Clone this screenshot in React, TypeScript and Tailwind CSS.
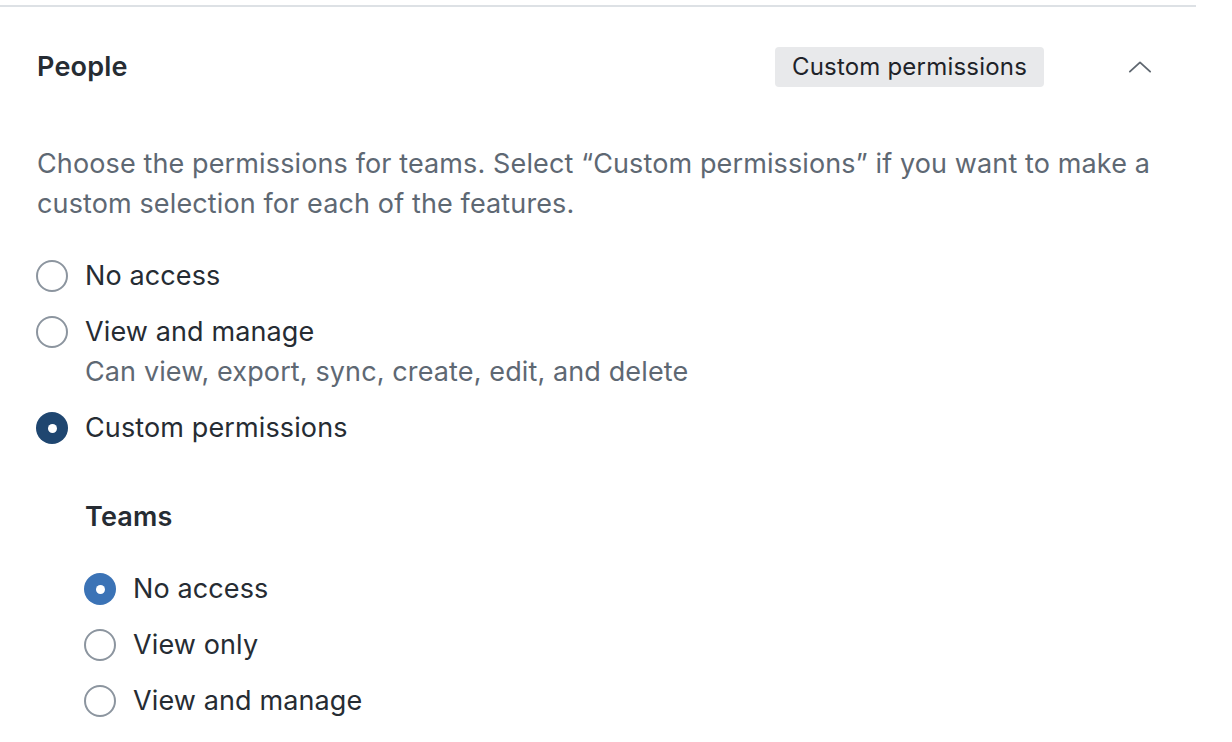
import React, { useState } from 'react';

type Option = {
    value: string;
    label: string;
    hint?: string;
};

const roleOptions: Option[] = [
    { value: 'none', label: 'No access' },
    { value: 'manage', label: 'View and manage', hint: 'Can view, export, sync, create, edit, and delete' },
    { value: 'custom', label: 'Custom permissions' },
];

const teamOptions: Option[] = [
    { value: 'none', label: 'No access' },
    { value: 'view', label: 'View only' },
    { value: 'manage', label: 'View and manage' },
];

const Radio = ({ checked, tone }: { checked: boolean; tone: 'navy' | 'blue' }) => {
    if (!checked) {
        return <span className="block w-8 h-8 rounded-full border-2 border-[#8c959f] bg-white shrink-0" />;
    }
    return (
        <span
            className={
                tone === 'navy'
                    ? 'flex items-center justify-center w-8 h-8 rounded-full bg-[#1f4670] shrink-0'
                    : 'flex items-center justify-center w-8 h-8 rounded-full bg-[#3b73b6] shrink-0'
            }
        >
            <span className="block w-[9px] h-[9px] rounded-full bg-white" />
        </span>
    );
};

const RadioGroup = ({
    options,
    selected,
    onSelect,
    tone,
}: {
    options: Option[];
    selected: string;
    onSelect: (v: string) => void;
    tone: 'navy' | 'blue';
}) => (
    <div className="flex flex-col gap-4">
        {options.map((opt) => (
            <div key={opt.value} className="flex flex-col">
                <button
                    type="button"
                    onClick={() => onSelect(opt.value)}
                    className="flex items-center gap-[17px] h-10 text-left"
                >
                    <Radio checked={selected === opt.value} tone={tone} />
                    <span className="text-[27px] text-[#262c33] tracking-[0.12px]">{opt.label}</span>
                </button>
                {opt.hint && (
                    <div className="pl-[49px] h-10 flex items-center text-[27px] text-[#5e6873] tracking-[0.12px]">
                        {opt.hint}
                    </div>
                )}
            </div>
        ))}
    </div>
);

const App = () => {
    const [role, setRole] = useState('custom');
    const [teams, setTeams] = useState('none');
    const [open, setOpen] = useState(true);

    return (
        <div className="bg-white min-h-[742px] pt-[5px]" style={{ fontFamily: 'Inter, "Noto Sans", sans-serif' }}>
            <div className="w-[1196px] border-t-2 border-[#dde1e5] pl-9 pr-11">
                <div className="flex items-center h-10 mt-10">
                    <h2 className="flex-1 text-[27px] font-semibold text-[#262c33] pl-px tracking-[0.2px]">People</h2>
                    <span className="h-10 px-[17px] flex items-center rounded bg-[#e8e9eb] text-[24px] text-[#1e2329] tracking-[0.2px]">
                        Custom permissions
                    </span>
                    <button type="button" onClick={() => setOpen(!open)} className="ml-[84px] w-6 h-6 flex items-center justify-center">
                        <svg width="26" height="16" viewBox="0 0 26 16" fill="none">
                            <path d="M2 13 L13 3 L24 13" stroke="#5f6770" strokeWidth="2" strokeLinecap="round" strokeLinejoin="round" />
                        </svg>
                    </button>
                </div>

                {open && (
                    <div>
                        <p className="mt-[57px] pl-px text-[27px] leading-10 text-[#5e6873] tracking-[0.12px] max-w-[1140px]">
                            Choose the permissions for teams. Select “Custom permissions” if you want to make a custom selection for each of the features.
                        </p>

                        <div className="mt-8">
                            <RadioGroup options={roleOptions} selected={role} onSelect={setRole} tone="navy" />
                        </div>

                        {role === 'custom' && (
                            <div className="pl-12 mt-[49px]">
                                <h3 className="h-10 pl-px flex items-center text-[27px] font-semibold text-[#262c33] tracking-[0.2px]">Teams</h3>
                                <div className="mt-8">
                                    <RadioGroup options={teamOptions} selected={teams} onSelect={setTeams} tone="blue" />
                                </div>
                            </div>
                        )}
                    </div>
                )}
            </div>
        </div>
    );
};

export default App;
